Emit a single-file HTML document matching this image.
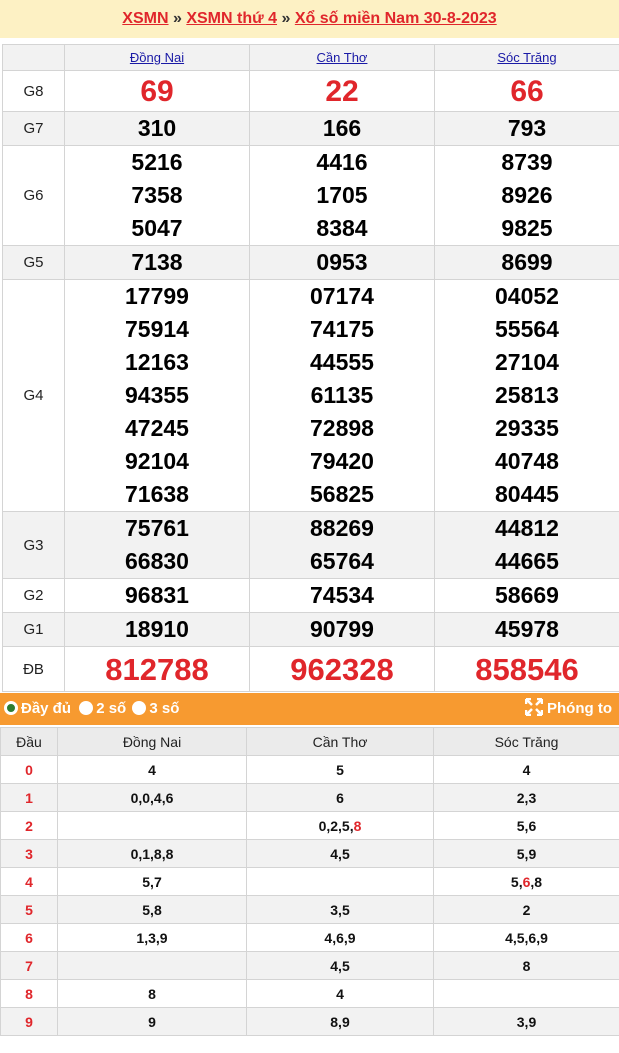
<!DOCTYPE html>
<html><head><meta charset="utf-8">
<style>
body{margin:0;width:619px;height:1053px;background:#fff;font-family:"Liberation Sans",Arial,sans-serif;overflow:hidden;position:relative}
.top{position:absolute;left:0;top:0;width:619px;height:38px;background:#fdf1c4;text-align:center;font-size:16px;font-weight:bold;line-height:38px;color:#333}
.top a{color:#e0262b;text-decoration:underline}
table{border-collapse:collapse;table-layout:fixed;position:absolute}
td{border:1px solid #d4d4d4;text-align:center;padding:0}
#t1{left:2px;top:44px;width:617px}
#t1 .l{font-size:15px;color:#222}
#t1 .n{font-size:23px;font-weight:bold;color:#000;line-height:33px}
#t1 .h a{color:#1a1aa6;font-size:13px;text-decoration:underline}
.g{background:#f2f2f2}
.r8{color:#e0262b!important;font-size:30px!important}
.db{color:#e0262b!important;font-size:31px!important}
.bar{position:absolute;left:0;top:693px;width:619px;height:32px;background:#f79a30;color:#fff;font-weight:bold;font-size:15px;line-height:32px}
.rad{display:inline-block;width:14px;height:14px;border-radius:50%;background:#fff;vertical-align:-2px;margin-right:3px;box-sizing:border-box}
#t2{left:0;top:727px;width:619px}
#t2 td{height:27px;font-size:14px;font-weight:bold;color:#111}
#t2 td:first-child{color:#e0262b}
#t2 tr.hd td{background:#ebebeb;font-weight:normal;color:#222;height:27px}
#t2 tr.hd td:first-child{color:#222}
.red{color:#e0262b}
</style></head><body>
<div class="top"><a>XSMN</a> » <a>XSMN thứ 4</a> » <a>Xổ số miền Nam 30-8-2023</a></div>
<table id="t1">
<colgroup><col style="width:62px"><col style="width:185px"><col style="width:185px"><col style="width:185px"></colgroup>
<tr class="g h" style="height:26px"><td></td><td><a>Đồng Nai</a></td><td><a>Cần Thơ</a></td><td><a>Sóc Trăng</a></td></tr>
<tr style="height:41px"><td class="l">G8</td><td class="n r8">69</td><td class="n r8">22</td><td class="n r8">66</td></tr>
<tr class="g" style="height:34px"><td class="l">G7</td><td class="n">310</td><td class="n">166</td><td class="n">793</td></tr>
<tr style="height:100px"><td class="l">G6</td><td class="n">5216<br>7358<br>5047</td><td class="n">4416<br>1705<br>8384</td><td class="n">8739<br>8926<br>9825</td></tr>
<tr class="g" style="height:34px"><td class="l">G5</td><td class="n">7138</td><td class="n">0953</td><td class="n">8699</td></tr>
<tr style="height:232px"><td class="l">G4</td><td class="n">17799<br>75914<br>12163<br>94355<br>47245<br>92104<br>71638</td><td class="n">07174<br>74175<br>44555<br>61135<br>72898<br>79420<br>56825</td><td class="n">04052<br>55564<br>27104<br>25813<br>29335<br>40748<br>80445</td></tr>
<tr class="g" style="height:67px"><td class="l">G3</td><td class="n">75761<br>66830</td><td class="n">88269<br>65764</td><td class="n">44812<br>44665</td></tr>
<tr style="height:34px"><td class="l">G2</td><td class="n">96831</td><td class="n">74534</td><td class="n">58669</td></tr>
<tr class="g" style="height:34px"><td class="l">G1</td><td class="n">18910</td><td class="n">90799</td><td class="n">45978</td></tr>
<tr style="height:45px"><td class="l">ĐB</td><td class="n db">812788</td><td class="n db">962328</td><td class="n db">858546</td></tr>
</table>
<div class="bar"><span style="margin-left:4px"><span class="rad" style="border:3px solid #fff;background:#2e7d32"></span>Đầy đủ</span> <span class="rad" style="margin-left:4px"></span>2 số <span class="rad" style="margin-left:2px"></span>3 số
<span style="position:absolute;right:7px;top:0"><svg width="18" height="18" viewBox="0 0 18 18" style="vertical-align:-3px;margin-right:4px"><path d="M2 2l5 5M16 2l-5 5M2 16l5-5M16 16l-5-5M1 1h5M1 1v5M17 1h-5M17 1v5M1 17h5M1 17v-5M17 17h-5M17 17v-5" stroke="#fff" stroke-width="2.5" fill="none"/></svg>Phóng to</span></div>
<table id="t2">
<colgroup><col style="width:57px"><col style="width:189px"><col style="width:187px"><col style="width:186px"></colgroup>
<tr class="hd"><td>Đầu</td><td>Đồng Nai</td><td>Cần Thơ</td><td>Sóc Trăng</td></tr>
<tr><td>0</td><td>4</td><td>5</td><td>4</td></tr>
<tr class="g"><td>1</td><td>0,0,4,6</td><td>6</td><td>2,3</td></tr>
<tr><td>2</td><td></td><td>0,2,5,<span class="red">8</span></td><td>5,6</td></tr>
<tr class="g"><td>3</td><td>0,1,8,8</td><td>4,5</td><td>5,9</td></tr>
<tr><td>4</td><td>5,7</td><td></td><td>5,<span class="red">6</span>,8</td></tr>
<tr class="g"><td>5</td><td>5,8</td><td>3,5</td><td>2</td></tr>
<tr><td>6</td><td>1,3,9</td><td>4,6,9</td><td>4,5,6,9</td></tr>
<tr class="g"><td>7</td><td></td><td>4,5</td><td>8</td></tr>
<tr><td>8</td><td class="red">8</td><td>4</td><td></td></tr>
<tr class="g"><td>9</td><td>9</td><td>8,9</td><td>3,9</td></tr>
</table>
</body></html>
